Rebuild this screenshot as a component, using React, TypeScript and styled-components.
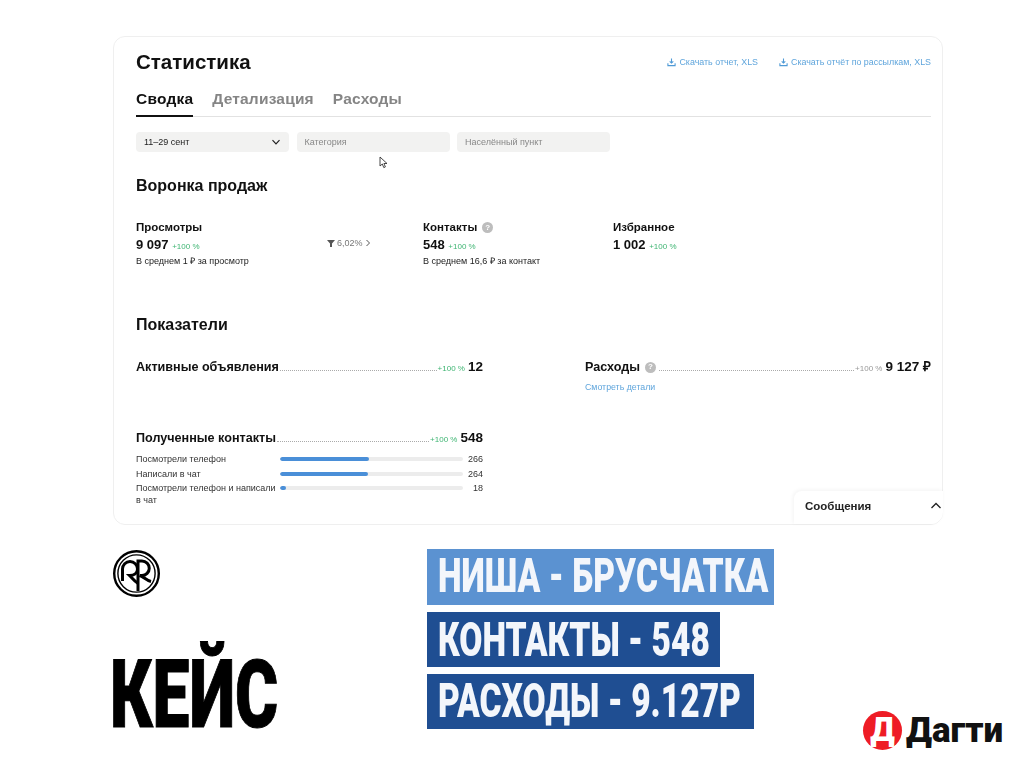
import styled, { createGlobalStyle } from "styled-components";

const GlobalStyle = createGlobalStyle`
  html, body {
    margin: 0;
    padding: 0;
    background: #fff;
    font-family: "Liberation Sans", Arial, sans-serif;
    color: #111;
  }
`;

const Page = styled.div`
  width: 1024px;
  height: 768px;
  box-sizing: border-box;
  padding: 36px 0 0 113px;
  overflow: hidden;
`;

const Card = styled.section`
  position: relative;
  width: 830px;
  height: 489px;
  box-sizing: border-box;
  padding: 14px 11px 0 22px;
  border: 1px solid #efefef;
  border-radius: 12px;
  filter: blur(0.35px);
`;

const Header = styled.header`
  display: flex;
  justify-content: space-between;
  align-items: center;
  height: 22px;
`;

const Title = styled.h1`
  margin: 0;
  font-size: 20.5px;
  line-height: 22px;
  font-weight: 700;
`;

const Downloads = styled.div`
  display: flex;
  gap: 21px;
`;

const DownloadLink = styled.a`
  display: flex;
  align-items: center;
  gap: 3px;
  font-size: 8.9px;
  color: #5fa5dc;
`;

const Tabs = styled.nav`
  display: flex;
  gap: 19px;
  margin-top: 16px;
  border-bottom: 1px solid #e2e2e2;
`;

const Tab = styled.div<{ $active?: boolean }>`
  height: 28px;
  line-height: 20px;
  margin-bottom: -1px;
  font-size: 15.5px;
  font-weight: 700;
  letter-spacing: 0.2px;
  color: ${(p) => (p.$active ? "#111" : "#858585")};
  border-bottom: ${(p) => (p.$active ? "2px solid #111" : "none")};
  box-sizing: border-box;
`;

const Filters = styled.div`
  display: flex;
  gap: 7.5px;
  margin-top: 15px;
`;

const Filter = styled.div<{ $value?: boolean }>`
  display: flex;
  justify-content: space-between;
  align-items: center;
  width: 153px;
  height: 20px;
  box-sizing: border-box;
  padding: 0 8px;
  border-radius: 4px;
  background: #f2f2f1;
  font-size: 9px;
  color: ${(p) => (p.$value ? "#222" : "#888")};
`;

const SectionTitle = styled.h2<{ $top: number }>`
  margin: ${(p) => p.$top}px 0 0;
  font-size: 16px;
  line-height: 18px;
  font-weight: 700;
`;

const Funnel = styled.div`
  display: grid;
  grid-template-columns: 191px 96px 190px 1fr;
  margin-top: 24px;
  height: 80px;
`;

const Metric = styled.div`
  display: flex;
  flex-direction: column;
`;

const MetricLabel = styled.div`
  display: flex;
  align-items: center;
  gap: 5px;
  height: 16px;
  font-size: 11.5px;
  font-weight: 700;
`;

const MetricValue = styled.div`
  margin-top: 1px;
  height: 17px;
  line-height: 17px;
  font-size: 13px;
  font-weight: 700;
`;

const Growth = styled.span<{ $grey?: boolean }>`
  font-size: 8px;
  font-weight: 400;
  color: ${(p) => (p.$grey ? "#999" : "#3fb573")};
`;

const MetricNote = styled.div`
  margin-top: 2px;
  font-size: 9px;
  line-height: 12px;
  color: #222;
`;

const Conversion = styled.div`
  display: flex;
  align-items: center;
  gap: 2px;
  height: 16px;
  margin-top: 16px;
  font-size: 9px;
  color: #777;
`;

const Help = styled.span`
  display: inline-flex;
  align-items: center;
  justify-content: center;
  width: 11px;
  height: 11px;
  border-radius: 50%;
  background: #bdbdbd;
  color: #fff;
  font-size: 8px;
  font-weight: 700;
`;

const Indicators = styled.div`
  display: grid;
  grid-template-columns: 347px 346px;
  column-gap: 102px;
  margin-top: 25px;
`;

const Indicator = styled.div<{ $height: number }>`
  height: ${(p) => p.$height}px;
`;

const IndicatorHead = styled.div`
  display: flex;
  align-items: baseline;
  height: 16px;
  line-height: 16px;
  font-size: 12.6px;
  font-weight: 700;
`;

const Leader = styled.span`
  flex: 1;
  margin: 0 1px;
  border-bottom: 1px dotted #aaa;
`;

const HeadHelp = styled(Help)`
  margin: 0 2px 0 5px;
  align-self: center;
`;

const HeadValue = styled.span`
  margin-left: 3px;
  font-size: 13.5px;
`;

const DetailsLink = styled.a`
  display: block;
  margin-top: 6px;
  font-size: 8.8px;
  line-height: 12px;
  color: #5fa5dc;
`;

const Bars = styled.div`
  display: flex;
  flex-direction: column;
  gap: 2.5px;
  margin-top: 7px;
`;

const BarRow = styled.div`
  display: grid;
  grid-template-columns: 144px 183px 20px;
  align-items: start;
  font-size: 9px;
  line-height: 12px;
  color: #333;
`;

const BarTrack = styled.div`
  height: 4px;
  margin-top: 4px;
  border-radius: 2px;
  background: #ececec;
  overflow: hidden;
`;

const BarFill = styled.div`
  height: 100%;
  border-radius: 2px;
  background: #4a8fd8;
`;

const BarValue = styled.div`
  text-align: right;
`;

const Messages = styled.div`
  position: absolute;
  right: -1px;
  bottom: 0;
  display: flex;
  justify-content: space-between;
  align-items: center;
  width: 149px;
  height: 33px;
  box-sizing: border-box;
  padding: 0 1px 4px 11px;
  background: #fff;
  border-radius: 8px 0 12px 0;
  box-shadow: -1px -1px 4px rgba(0, 0, 0, 0.05);
  font-size: 11.5px;
  font-weight: 700;
  color: #222;
`;

const Cursor = styled.svg`
  position: absolute;
  left: 265px;
  top: 119px;
`;

const Bottom = styled.div`
  display: flex;
  margin-top: 24px;
`;

const Brand = styled.div`
  display: flex;
  flex-direction: column;
  width: 314px;
`;

const LogoSvg = styled.svg`
  flex-shrink: 0;
  margin-top: 1px;
`;

const CaseWord = styled.div`
  margin: 54px 0 0 -3px;
  height: 88px;
  line-height: 88px;
  font-family: Roboto, "Liberation Sans", sans-serif;
  font-size: 94px;
  font-weight: 900;
  color: #000;
  -webkit-text-stroke: 1px #000;
  transform: scaleX(0.7);
  transform-origin: left center;
  white-space: nowrap;
`;

const Banners = styled.div`
  display: flex;
  flex-direction: column;
  gap: 7px;
`;

const Banner = styled.div<{ $width: number; $light?: boolean; $height: number }>`
  width: ${(p) => p.$width}px;
  height: ${(p) => p.$height}px;
  box-sizing: border-box;
  padding-left: 11px;
  background: ${(p) => (p.$light ? "#5b92d1" : "#1f4e92")};
`;

const BannerText = styled.div<{ $height: number }>`
  width: 300px;
  line-height: ${(p) => p.$height}px;
  font-family: Roboto, "Liberation Sans", sans-serif;
  font-size: 49px;
  font-weight: 900;
  color: #f3f6fb;
  white-space: nowrap;
  transform: scaleX(0.685);
  transform-origin: left center;
`;

const Dagti = styled.div`
  position: absolute;
  left: 863px;
  top: 711px;
  display: flex;
  align-items: center;
  gap: 4px;
`;

const DagtiBadge = styled.div`
  display: flex;
  align-items: center;
  justify-content: center;
  width: 39px;
  height: 39px;
  padding-bottom: 2px;
  box-sizing: border-box;
  border-radius: 50%;
  background: #ee1c25;
  color: #fff;
  font-family: Roboto, "Liberation Sans", sans-serif;
  font-size: 33px;
  font-weight: 900;
`;

const DagtiName = styled.div`
  font-family: Roboto, "Liberation Sans", sans-serif;
  font-size: 35px;
  line-height: 38px;
  font-weight: 900;
  color: #111;
`;

const DownloadIcon = () => (
  <svg width="9" height="10" viewBox="0 0 10 10" fill="none" stroke="#4f9ad6" strokeWidth="1.2">
    <path d="M5 1v5M3 4.2 5 6.2 7 4.2M1 6.5V9h8V6.5" />
  </svg>
);

const LogoMark = () => (
  <LogoSvg width="47" height="47" viewBox="0 0 47 47" fill="none" stroke="#000">
    <circle cx="23.5" cy="23.5" r="22.3" strokeWidth="2.4" />
    <circle cx="23.5" cy="23.5" r="18.6" strokeWidth="1.4" />
    <path strokeWidth="3" d="M9.5 31V19a7.5 7.5 0 0 1 15 0c0 4-3.5 6.5-8 6.5 3 3 5 6 8.5 8" />
    <path strokeWidth="3" d="M25 41V11h4a7.2 7.2 0 0 1 0 14.5h-2c4 1.5 6.5 5 11 6" />
  </LogoSvg>
);

const rows = [
  { label: "Посмотрели телефон", value: 266, width: 89 },
  { label: "Написали в чат", value: 264, width: 88 },
  { label: "Посмотрели телефон и написали в чат", value: 18, width: 6 },
];

export default function App() {
  return (
    <Page>
      <GlobalStyle />
      <Card>
        <Header>
          <Title>Статистика</Title>
          <Downloads>
            <DownloadLink><DownloadIcon />Скачать отчет, XLS</DownloadLink>
            <DownloadLink><DownloadIcon />Скачать отчёт по рассылкам, XLS</DownloadLink>
          </Downloads>
        </Header>
        <Tabs>
          <Tab $active>Сводка</Tab>
          <Tab>Детализация</Tab>
          <Tab>Расходы</Tab>
        </Tabs>
        <Filters>
          <Filter $value>
            11–29 сент
            <svg width="10" height="10" viewBox="0 0 10 10" fill="none" stroke="#222" strokeWidth="1.2">
              <path d="M1.5 3.2 5 6.8 8.5 3.2" />
            </svg>
          </Filter>
          <Filter>Категория</Filter>
          <Filter>Населённый пункт</Filter>
        </Filters>
        <Cursor width="10" height="13" viewBox="0 0 10 13" fill="#fff" stroke="#333" strokeWidth="0.9">
          <path d="M1 1v9l2.3-2 1.5 3.6 1.6-.7-1.5-3.4H8z" />
        </Cursor>

        <SectionTitle $top={25}>Воронка продаж</SectionTitle>
        <Funnel>
          <Metric>
            <MetricLabel>Просмотры</MetricLabel>
            <MetricValue>9 097 <Growth>+100 %</Growth></MetricValue>
            <MetricNote>В среднем 1 ₽ за просмотр</MetricNote>
          </Metric>
          <Conversion>
            <svg width="8" height="8" viewBox="0 0 8 8" fill="#555">
              <path d="M0 1h8L5 4.5V8H3V4.5z" />
            </svg>
            6,02%
            <svg width="6" height="8" viewBox="0 0 6 8" fill="none" stroke="#555">
              <path d="M1.5 1 4.5 4 1.5 7" />
            </svg>
          </Conversion>
          <Metric>
            <MetricLabel>Контакты <Help>?</Help></MetricLabel>
            <MetricValue>548 <Growth>+100 %</Growth></MetricValue>
            <MetricNote>В среднем 16,6 ₽ за контакт</MetricNote>
          </Metric>
          <Metric>
            <MetricLabel>Избранное</MetricLabel>
            <MetricValue>1 002 <Growth>+100 %</Growth></MetricValue>
          </Metric>
        </Funnel>

        <SectionTitle $top={17}>Показатели</SectionTitle>
        <Indicators>
          <Indicator $height={71}>
            <IndicatorHead>
              Активные объявления<Leader /><Growth>+100 %</Growth><HeadValue>12</HeadValue>
            </IndicatorHead>
          </Indicator>
          <Indicator $height={71}>
            <IndicatorHead>
              Расходы<HeadHelp>?</HeadHelp><Leader /><Growth $grey>+100 %</Growth><HeadValue>9 127 ₽</HeadValue>
            </IndicatorHead>
            <DetailsLink>Смотреть детали</DetailsLink>
          </Indicator>
          <Indicator $height={80}>
            <IndicatorHead>
              Полученные контакты<Leader /><Growth>+100 %</Growth><HeadValue>548</HeadValue>
            </IndicatorHead>
            <Bars>
              {rows.map((row) => (
                <BarRow key={row.label}>
                  <div>{row.label}</div>
                  <BarTrack>
                    <BarFill style={{ width: row.width }} />
                  </BarTrack>
                  <BarValue>{row.value}</BarValue>
                </BarRow>
              ))}
            </Bars>
          </Indicator>
        </Indicators>

        <Messages>
          Сообщения
          <svg width="12" height="12" viewBox="0 0 12 12" fill="none" stroke="#222" strokeWidth="1.3">
            <path d="M1.5 8 6 3.5 10.5 8" />
          </svg>
        </Messages>
      </Card>

      <Bottom>
        <Brand>
          <LogoMark />
          <CaseWord>КЕЙС</CaseWord>
        </Brand>
        <Banners>
          <Banner $light $width={347} $height={56}>
            <BannerText $height={53}>НИША - БРУСЧАТКА</BannerText>
          </Banner>
          <Banner $width={293} $height={55}>
            <BannerText $height={55}>КОНТАКТЫ - 548</BannerText>
          </Banner>
          <Banner $width={327} $height={55}>
            <BannerText $height={54}>РАСХОДЫ - 9.127Р</BannerText>
          </Banner>
        </Banners>
      </Bottom>

      <Dagti>
        <DagtiBadge>Д</DagtiBadge>
        <DagtiName>Дагти</DagtiName>
      </Dagti>
    </Page>
  );
}
